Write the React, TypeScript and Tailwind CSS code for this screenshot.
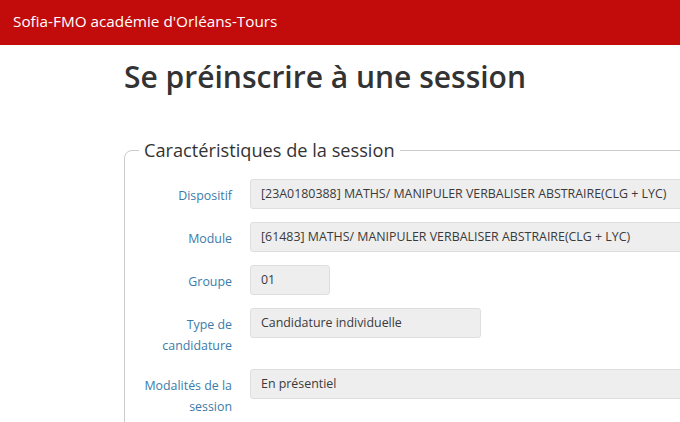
import React from "react";

const font = { fontFamily: '"Open Sans", "Noto Sans", sans-serif' };

function Row({
  label,
  value,
  width,
}: {
  label: React.ReactNode;
  value: string;
  width: string;
}) {
  return (
    <div className="flex items-start">
      <div className="w-[107px] shrink-0 text-right text-[12.4px] leading-[21px] pt-[6px] text-[#3c7ba8]">
        {label}
      </div>
      <div
        className={`ml-[18px] h-[30px] shrink-0 rounded-[3px] border border-[#dedede] bg-[#eeeeee] px-[10px] text-[12.4px] leading-[28px] text-[#3a3a3a] whitespace-nowrap ${width}`}
      >
        {value}
      </div>
    </div>
  );
}

export default function App() {
  return (
    <div className="w-[680px] h-[422px] overflow-hidden bg-white" style={font}>
      <div className="h-[45px] bg-[#c20c0c] px-[13px] text-[15.3px] leading-[43px] text-white">
        Sofia-FMO académie d'Orléans-Tours
      </div>
      <div className="pl-[124px]">
        <h1 className="mt-[15px] text-[30px] leading-[33px] font-semibold text-[#333]">
          Se préinscrire à une session
        </h1>
        <fieldset className="mt-[44px] mr-[-40px] rounded-[8px] border border-[#cccccc] pb-[20px]">
          <legend className="ml-[14px] px-[5px] text-[18.2px] leading-[26px] text-[#333]">
            Caractéristiques de la session
          </legend>
          <div className="flex flex-col gap-[13px] pt-[16px]">
            <Row
              label="Dispositif"
              value="[23A0180388] MATHS/ MANIPULER VERBALISER ABSTRAIRE(CLG + LYC)"
              width="w-[500px]"
            />
            <Row
              label="Module"
              value="[61483] MATHS/ MANIPULER VERBALISER ABSTRAIRE(CLG + LYC)"
              width="w-[500px]"
            />
            <Row label="Groupe" value="01" width="w-[80px]" />
            <Row
              label={
                <>
                  Type de
                  <br />
                  candidature
                </>
              }
              value="Candidature individuelle"
              width="w-[231px]"
            />
            <Row
              label={
                <>
                  Modalités de la
                  <br />
                  session
                </>
              }
              value="En présentiel"
              width="w-[500px]"
            />
          </div>
        </fieldset>
      </div>
    </div>
  );
}
